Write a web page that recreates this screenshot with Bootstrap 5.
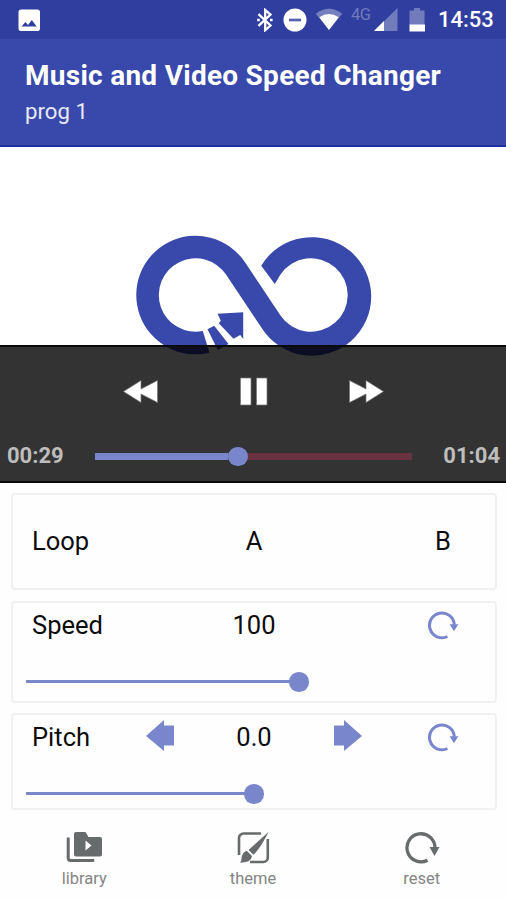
<!DOCTYPE html>
<html lang="en">
<head>
<meta charset="utf-8">
<meta name="viewport" content="width=device-width, initial-scale=1">
<title>Music and Video Speed Changer</title>
<link href="https://cdn.jsdelivr.net/npm/bootstrap@5.3.0/dist/css/bootstrap.min.css" rel="stylesheet">
<style>
  body { font-family: Roboto, "Liberation Sans", sans-serif; background: #fefefe; color: #0c0c0c; }
  .phone { width: 506px; height: 900px; }
  svg { display: block; flex: none; }
  .statusbar { height: 39px; background: #303f9f; padding: 1px 12px 0 18px; }
  .clock { font-size: 22px; font-weight: 500; line-height: 38px; width: 56px; margin-left: 12px; white-space: nowrap; }
  .net { font-size: 16.5px; line-height: 16px; width: 19px; height: 26px; margin: 0 4px 0 8px; color: #6f79bd; }
  .net span { letter-spacing: -.5px; }
  .dnd { margin-left: 10px; }
  .wifi { margin-left: 8px; }
  .battery { margin-left: 11px; }
  .appbar { height: 108px; background: #3949ab; border-bottom: 2px solid #1c2f9e; padding: 21px 25px 0; }
  .appbar h1 { font-size: 28px; line-height: 32px; font-weight: 700; margin: 0; white-space: nowrap; letter-spacing: .27px; }
  .appbar p { font-size: 22.2px; line-height: 28px; margin: 5px 0 0; color: #e8eaf8; }
  .stage { height: 336px; background: #fff; padding: 88px 0 0 136px; }
  .player { height: 138px; background: rgba(0,0,0,.8); border: solid #0a0a0a; border-width: 2px 0; }
  .transport { height: 89px; padding: 0 120px 0 121px; }
  .time { font-size: 22px; font-weight: 700; color: #bdbdbd; width: 57px; line-height: 40px; white-space: nowrap; }
  .timeline { padding: 0 6px 0 7px; }
  .seek { width: 317px; height: 7px; background: #693240; margin-top: 1px; }
  .fill { height: 100%; background: #7986cb; }
  .knob { width: 19.5px; height: 19.5px; border-radius: 50%; background: #7986cb; flex: none; }
  .panel-list { padding: 10px 9px 0 11px; }
  .panel { border: 2px solid #f1f1f1; border-radius: 4px; padding: 0 5px; background: #fefefe; font-size: 25.5px; line-height: 44px; }
  .panel-loop { height: 97px; margin-bottom: 11px; padding-bottom: 1px; }
  .panel-speed { height: 102px; margin-bottom: 10px; }
  .panel-pitch { height: 97px; }
  .panel .col { min-width: 0; white-space: nowrap; }
  .caption-cell { text-indent: 14px; }
  .reset-icon { color: #7986cb; padding-bottom: 1px; }
  .slide { height: 20px; margin: 25px 0 0 8px; width: 456px; }
  .slide .fill { height: 3px; margin-right: -1px; margin-top: -1px; }
  .tabs { padding-top: 20px; color: #676b6b; font-size: 16.5px; line-height: 22px; }
  .tabs svg { height: 36px; }
  .tabs span { color: #858585; margin-top: 2px; }
</style>
</head>
<body>
<svg width="0" height="0" class="position-absolute">
  <symbol id="redo" viewBox="0 0 32 30">
    <path d="M20.400 26.500A12.400 12.400 0 1 1 27.300 14.800" fill="none" stroke="currentColor" stroke-width="3"/>
    <path d="M22.600 14.200h8.700l-4.300 7z" fill="currentColor"/>
  </symbol>
</svg>
<div class="phone d-flex flex-column overflow-hidden">
  <div class="statusbar d-flex align-items-center text-white">
    <svg width="23" height="23" viewBox="0 0 23 23"><path fill="#fff" fill-rule="evenodd" d="M3 .5h16.500a2.500 2.500 0 0 1 2.500 2.500v16.500a2.500 2.500 0 0 1-2.500 2.500H3a2.500 2.500 0 0 1-2.500-2.500V3A2.500 2.500 0 0 1 3 .5zM3.500 17.500h15.200l-4.900-6.500-3.800 4.900-2.500-3z"/></svg>
    <svg class="ms-auto" width="16" height="24" viewBox="0 0 16 24"><path d="M1.500 6.200l12 11.300-5.300 4.700V2l5.300 4.500-12 11.300" fill="none" stroke="#fff" stroke-width="2.300"/><path d="M.2 10.700h2.600v2.600H.2zM13 10.700h2.600v2.600H13z" fill="#fff"/></svg>
    <svg class="dnd" width="24" height="24" viewBox="0 0 24 24"><circle cx="12" cy="12" r="11.500" fill="#fff"/><path d="M6 12h12" stroke="#5561b0" stroke-width="2.700"/></svg>
    <svg class="wifi" width="28" height="24" viewBox="0 0 28 24"><path d="M.8 5.700Q14-4.200 27.200 5.700L14 22z" fill="#7680bf"/><path d="M4.300 9.200Q14 2.800 23.700 9.200L14 22z" fill="#fff"/></svg>
    <div class="net"><span>4G</span></div>
    <svg width="24" height="24" viewBox="0 0 24 24"><path d="M23.500 0v23H0z" fill="#717cbd"/><path d="M10 13v10H0z" fill="#fff"/></svg>
    <svg class="battery" width="17" height="25" viewBox="0 0 17 25"><path d="M5 0h6v2.500h4.500V17H.5V2.500H5z" fill="#717cbd"/><path d="M.5 16.500h15.500v7H.5z" fill="#fff"/></svg>
    <div class="clock">14:53</div>
  </div>

  <header class="appbar text-white">
    <h1>Music and Video Speed Changer</h1>
    <p>prog 1</p>
  </header>

  <section class="stage position-relative">
    <svg width="236" height="121" viewBox="136.500 235 236 121" fill="#3949ab">
      <path d="M203.300 331A36.700 36.700 0 1 1 226.500 274.600L262.200 328A59.300 59.300 0 1 0 261.700 265.700L275.300 284L281 274.600A36.700 36.700 0 1 1 281 315.400L245.300 262A59.300 59.300 0 1 0 210 352.700Z"/>
      <path d="M208 329.300L214.700 325.700L229 344L218.300 350Z"/>
      <path d="M218 313.700L243.700 312.300V339L240.700 335L234 338.700L219.300 323.300L221.300 320.700Z"/>
    </svg>
    <div class="player position-absolute bottom-0 start-0 end-0">
      <div class="transport d-flex justify-content-between align-items-center">
        <svg width="40" height="30" viewBox="0 0 40 30"><path d="M2.500 14.500L20 3.500v8.500L36.500 3.500v22L20 17v8.500z" fill="#fff" stroke="#777" stroke-width=".7"/></svg>
        <svg width="32" height="30" viewBox="0 0 32 30"><path d="M2.500 1h10.500v27H2.500zM18.500 1H29v27H18.500z" fill="#fff" stroke="#777" stroke-width=".7"/></svg>
        <svg width="40" height="30" viewBox="0 0 40 30"><path d="M37.500 14.500L20 3.500v8.500L3.500 3.500v22L20 17v8.500z" fill="#fff" stroke="#777" stroke-width=".7"/></svg>
      </div>
      <div class="timeline d-flex align-items-center justify-content-between">
        <div class="time">00:29</div>
        <div class="seek d-flex align-items-center"><div class="fill" style="width:133px"></div><div class="knob"></div></div>
        <div class="time text-end">01:04</div>
      </div>
    </div>
  </section>

  <main class="panel-list d-flex flex-column">
    <div class="panel panel-loop d-flex align-items-center">
      <div class="row g-0 w-100 text-center">
        <div class="col text-start caption-cell">Loop</div><div class="col"></div><div class="col">A</div><div class="col"></div><div class="col">B</div>
      </div>
    </div>
    <div class="panel panel-speed">
      <div class="row g-0 text-center align-items-center">
        <div class="col text-start caption-cell">Speed</div><div class="col"></div><div class="col">100</div><div class="col"></div>
        <div class="col d-flex justify-content-center reset-icon"><svg width="32" height="30"><use href="#redo"/></svg></div>
      </div>
      <div class="slide d-flex align-items-center"><div class="fill" style="width:264px"></div><div class="knob"></div></div>
    </div>
    <div class="panel panel-pitch">
      <div class="row g-0 text-center align-items-center">
        <div class="col text-start caption-cell">Pitch</div>
        <div class="col d-flex justify-content-center pb-1"><svg width="28" height="32" viewBox="0 0 28 32"><path d="M0 17L18 1v5.500h10v20H18V32z" fill="#7986cb"/></svg></div>
        <div class="col">0.0</div>
        <div class="col d-flex justify-content-center pb-1"><svg width="28" height="32" viewBox="0 0 28 32"><path d="M28 17L10 1v5.500H0v20h10V32z" fill="#7986cb"/></svg></div>
        <div class="col d-flex justify-content-center reset-icon"><svg width="32" height="30"><use href="#redo"/></svg></div>
      </div>
      <div class="slide d-flex align-items-center"><div class="fill" style="width:219px"></div><div class="knob"></div></div>
    </div>
  </main>

  <nav class="tabs row g-0 text-center">
    <div class="col d-flex flex-column align-items-center">
      <svg width="36" height="36" viewBox="0 0 36 36"><path fill="currentColor" fill-rule="evenodd" d="M8 4a2 2 0 0 1 2-2h9.500l3 5h11.500a2 2 0 0 1 2 2v15.500a2 2 0 0 1-2 2H10a2 2 0 0 1-2-2zM19.500 10.500v10l6-5z"/><path d="M2.200 7.500V28a2.500 2.500 0 0 0 2.500 2.500h23.500" fill="none" stroke="currentColor" stroke-width="3"/></svg>
      <span>library</span>
    </div>
    <div class="col d-flex flex-column align-items-center">
      <svg width="34" height="36" viewBox="0 0 34 36" fill="currentColor"><path d="M25 3.500H7.500a4.500 4.500 0 0 0-4.500 4.500v17M31.800 9v18.500a4.500 4.500 0 0 1-4.500 4.500H14" fill="none" stroke="currentColor" stroke-width="2.600"/><path d="M32.500 2L12.500 20l4.900 4.800c4.500-4.300 10-12.300 15.100-22.800z"/><path d="M11 21l5 5c-.7 4.900-5 6.700-12 6.700 2.200-2.200.9-4.200 2.300-7.600 1-2.300 2.500-4 4.700-4.100z"/></svg>
      <span>theme</span>
    </div>
    <div class="col d-flex flex-column align-items-center">
      <svg width="36" height="36" viewBox="0 0 36 36"><path d="M23.500 30.200A14 14 0 1 1 31 18" fill="none" stroke="currentColor" stroke-width="3.300"/><path d="M25.500 17h10l-5 9z" fill="currentColor"/></svg>
      <span>reset</span>
    </div>
  </nav>
</div>
<script src="https://cdn.jsdelivr.net/npm/bootstrap@5.3.0/dist/js/bootstrap.bundle.min.js"></script>
</body>
</html>
